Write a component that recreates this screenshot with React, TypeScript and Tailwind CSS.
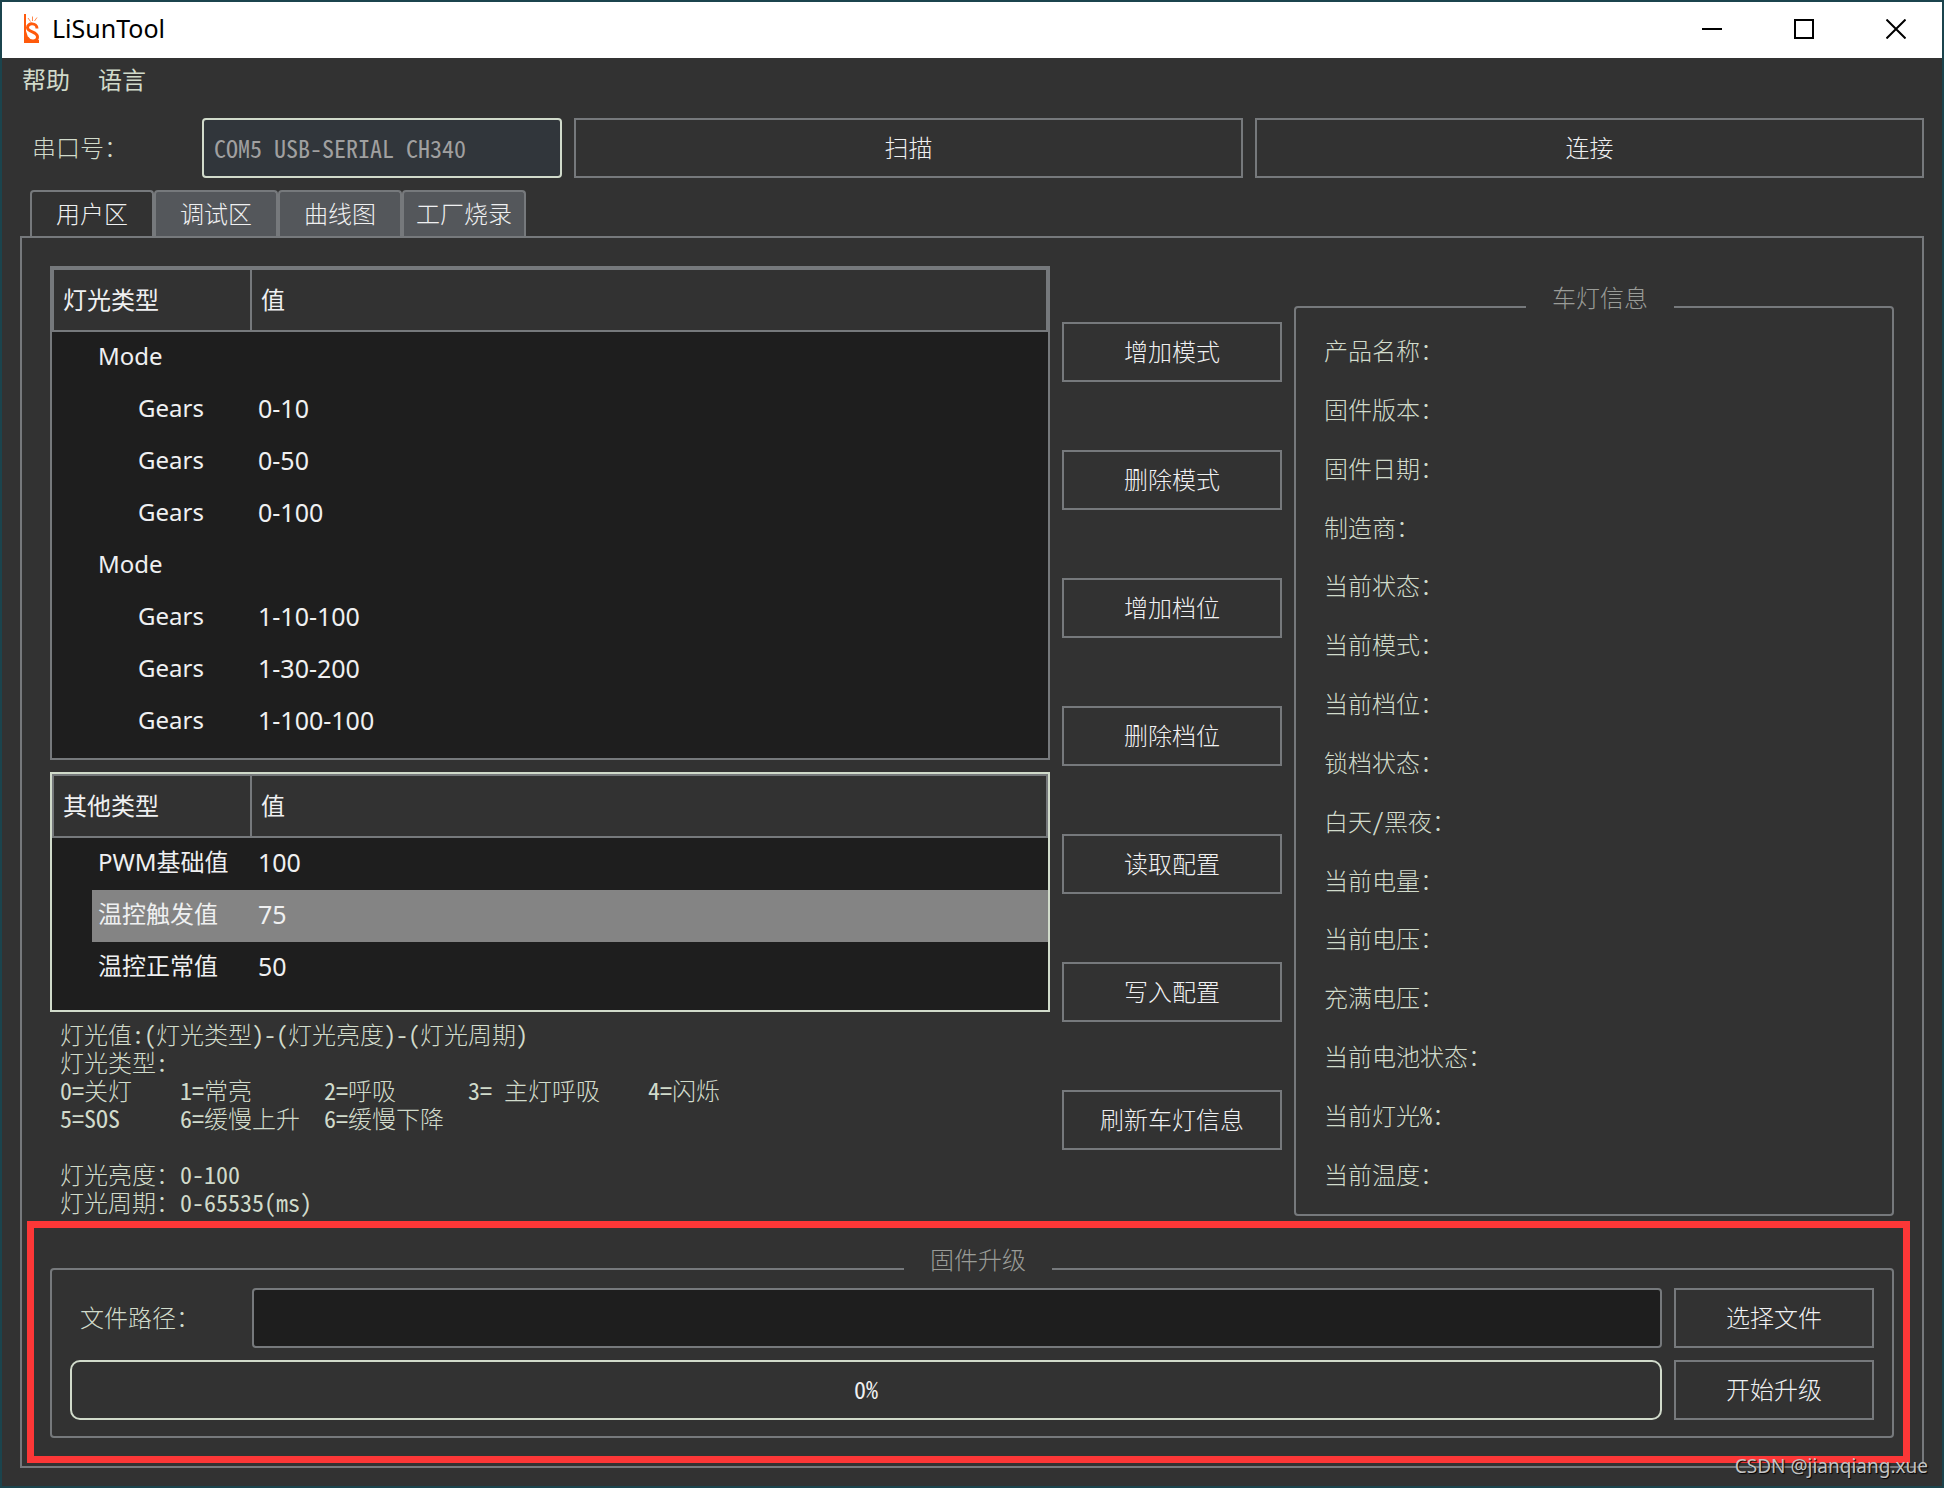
import type { ReactNode } from "react";

type Row = {
  name: string;
  value?: string;
  nested?: boolean;
  selected?: boolean;
};

const tabs = ["用户区", "调试区", "曲线图", "工厂烧录"];

const lightRows: Row[] = [
  { name: "Mode" },
  { name: "Gears", value: "0-10", nested: true },
  { name: "Gears", value: "0-50", nested: true },
  { name: "Gears", value: "0-100", nested: true },
  { name: "Mode" },
  { name: "Gears", value: "1-10-100", nested: true },
  { name: "Gears", value: "1-30-200", nested: true },
  { name: "Gears", value: "1-100-100", nested: true },
];

const otherRows: Row[] = [
  { name: "PWM基础值", value: "100" },
  { name: "温控触发值", value: "75", selected: true },
  { name: "温控正常值", value: "50" },
];

const actions = [
  "增加模式",
  "删除模式",
  "增加档位",
  "删除档位",
  "读取配置",
  "写入配置",
  "刷新车灯信息",
];

const infoLabels = [
  "产品名称：",
  "固件版本：",
  "固件日期：",
  "制造商：",
  "当前状态：",
  "当前模式：",
  "当前档位：",
  "锁档状态：",
  "白天/黑夜：",
  "当前电量：",
  "当前电压：",
  "充满电压：",
  "当前电池状态：",
  "当前灯光%：",
  "当前温度：",
];

const helpLines = [
  "灯光值:(灯光类型)-(灯光亮度)-(灯光周期)",
  "灯光类型:",
  "0=关灯    1=常亮      2=呼吸      3= 主灯呼吸    4=闪烁",
  "5=SOS     6=缓慢上升  6=缓慢下降",
  "",
  "灯光亮度：0-100",
  "灯光周期：0-65535(ms)",
];

// Latin characters take half the width of a Chinese one
function MonoText({ text }: { text: string }) {
  return (
    <>
      {text.split(/([\x20-\x7e]+)/).map((part, i) =>
        i % 2 === 1 ? (
          <span
            key={i}
            className="font-['Noto_Sans_Mono_CJK_SC','Liberation_Mono',monospace]"
          >
            {part}
          </span>
        ) : (
          part
        )
      )}
    </>
  );
}

function PushButton({
  children,
  className = "",
}: {
  children: ReactNode;
  className?: string;
}) {
  return (
    <button
      type="button"
      className={`h-[60px] border-2 border-[#76797c] pb-0.5 text-[#eff0f1] ${className}`}
    >
      {children}
    </button>
  );
}

function ValueTable({
  title,
  rows,
  className,
}: {
  title: string;
  rows: Row[];
  className: string;
}) {
  return (
    <div
      className={`border-2 bg-[#1e1e1e] text-[#eff0f1] font-normal font-['Noto_Sans','Noto_Sans_CJK_SC',sans-serif] ${className}`}
    >
      <table className="w-full table-fixed border-separate border-spacing-0 text-left">
        <thead>
          <tr className="h-16 bg-[#323232]">
            <th className="w-[200px] border-2 border-[#76797c] py-0 pl-[9px] font-normal">
              {title}
            </th>
            <th className="border-2 border-l-0 border-[#76797c] py-0 pl-[9px] font-normal">
              值
            </th>
          </tr>
        </thead>
        <tbody>
          {rows.map((row, i) => (
            <tr key={i} className="h-[52px]">
              <td className="p-0">
                <div
                  className={`ml-10 h-[52px] leading-[48px] whitespace-nowrap ${
                    row.nested ? "pl-[46px]" : "pl-1.5"
                  } ${row.selected ? "bg-[#848484]" : ""}`}
                >
                  {row.name}
                </div>
              </td>
              <td
                className={`pt-0 pb-1 pl-1.5 text-[25px] leading-[48px] ${
                  row.selected ? "bg-[#848484]" : ""
                }`}
              >
                {row.value}
              </td>
            </tr>
          ))}
        </tbody>
      </table>
    </div>
  );
}

function Logo() {
  return (
    <svg
      width="16"
      height="30"
      viewBox="0 0 16 30"
      fill="none"
      aria-hidden="true"
    >
      <path d="M0 0H2V17L5 26H15V29H0Z" fill="#ff5a0c" />
      <path
        d="M13 14.500C13 8.500 3.500 8.500 3.500 13.500C3.500 18.500 13.500 17.500 13.500 23C13.500 28 5.500 28.500 3 23.500"
        stroke="#ff5a0c"
        strokeWidth="3"
      />
      <path
        d="M4 4L6.500 7.500M8.500 2.500V7M13 3.500L10.500 7"
        stroke="#ff8a50"
        strokeWidth="1"
      />
    </svg>
  );
}

function TitleBar() {
  return (
    <header className="flex h-14 items-center bg-white pb-0.5 text-black">
      <div className="flex items-center gap-3 pl-[22px] text-[25px] font-normal font-['Noto_Sans',sans-serif]">
        <Logo />
        <h1>LiSunTool</h1>
      </div>
      <div className="ml-auto flex h-full">
        <button
          type="button"
          aria-label="最小化"
          className="flex w-[92px] items-center justify-center"
        >
          <svg width="20" height="20" viewBox="0 0 20 20">
            <path d="M0 10H20" stroke="#000" strokeWidth="2" />
          </svg>
        </button>
        <button
          type="button"
          aria-label="最大化"
          className="flex w-[92px] items-center justify-center"
        >
          <svg width="20" height="20" viewBox="0 0 20 20">
            <rect
              x="1"
              y="1"
              width="18"
              height="18"
              fill="none"
              stroke="#000"
              strokeWidth="2"
            />
          </svg>
        </button>
        <button
          type="button"
          aria-label="关闭"
          className="flex w-[92px] items-center justify-center"
        >
          <svg width="20" height="20" viewBox="0 0 20 20">
            <path
              d="M0.500 0.500L19.500 19.500M19.500 0.500L0.500 19.500"
              stroke="#000"
              strokeWidth="2"
            />
          </svg>
        </button>
      </div>
    </header>
  );
}

export default function App() {
  return (
    <div className="min-h-screen bg-[#1b444d] p-0.5 text-[24px] font-light text-[#d1dbcb] font-['Noto_Sans_CJK_SC',sans-serif]">
      <div className="relative bg-[#323232] pb-[18px]">
        <TitleBar />

        <nav className="flex h-[46px] items-center gap-7 pb-1 pl-5 font-normal">
          <button type="button">帮助</button>
          <button type="button">语言</button>
        </nav>

        <div className="mt-3.5 flex items-center gap-3 pr-[18px] pl-[30px]">
          <label htmlFor="port" className="w-[158px] pb-0.5">
            串口号：
          </label>
          <select
            id="port"
            className="h-[60px] w-[360px] appearance-none rounded-sm border-2 border-[#d1dbcb] bg-[#31363b] px-2.5 text-[#a0a0a0] font-['Noto_Sans_Mono_CJK_SC','Liberation_Mono',monospace]"
          >
            <option>COM5 USB-SERIAL CH340</option>
          </select>
          <PushButton className="flex-1">扫描</PushButton>
          <PushButton className="flex-1">连接</PushButton>
        </div>

        <div role="tablist" className="mt-3 flex pl-7">
          {tabs.map((tab, i) => (
            <button
              key={tab}
              type="button"
              role="tab"
              aria-selected={i === 0}
              className={`h-[46px] w-[124px] rounded-t-sm border-2 border-b-0 border-[#76797c] pb-0.5 text-[#eff0f1] ${
                i === 0 ? "" : "bg-[#54575b]"
              }`}
            >
              {tab}
            </button>
          ))}
        </div>

        <main className="mr-[18px] ml-[18px] border-2 border-[#76797c] p-7">
          <div className="grid grid-cols-[minmax(0,5fr)_220px_minmax(0,3fr)] gap-3">
            <div>
              <ValueTable
                title="灯光类型"
                rows={lightRows}
                className="border-[#76797c] pb-2.5"
              />
              <ValueTable
                title="其他类型"
                rows={otherRows}
                className="mt-3 border-[#d1dbcb] pb-4"
              />
              <div className="mt-2 mb-0.5 pl-2.5 whitespace-pre">
                {helpLines.map((line, i) => (
                  <p key={i} className="h-7 leading-7">
                    <MonoText text={line} />
                  </p>
                ))}
              </div>
            </div>

            <div className="flex flex-col gap-[68px] pt-14">
              {actions.map((action) => (
                <PushButton key={action}>{action}</PushButton>
              ))}
            </div>

            <fieldset className="mt-[22px] mb-0.5 flex min-w-0 flex-col rounded-sm border-2 border-[#76797c] pr-4 pl-7">
              <legend className="mx-auto px-[26px] pb-5 leading-[18px] text-[#9a9c98]">
                车灯信息
              </legend>
              <ul className="flex flex-1 flex-col justify-between pt-[9px] pb-[25px]">
                {infoLabels.map((label) => (
                  <li key={label} className="h-[30px] leading-[30px]">
                    <MonoText text={label} />
                  </li>
                ))}
              </ul>
            </fieldset>
          </div>

          <div className="relative mt-8">
            <fieldset className="rounded-sm border-2 border-[#76797c] pl-3">
              <legend className="mx-auto px-[26px] pb-5 leading-[18px] text-[#9a9c98]">
                固件升级
              </legend>
              <div className="flex flex-col gap-3 pr-[18px] pb-4 pl-1.5">
                <div className="flex items-center gap-3">
                  <label htmlFor="path" className="w-[170px] pb-0.5 pl-2.5">
                    文件路径：
                  </label>
                  <input
                    id="path"
                    type="text"
                    className="h-[60px] min-w-0 flex-1 rounded-sm border-2 border-[#76797c] bg-[#1e1e1e] px-2.5"
                  />
                  <PushButton className="w-[200px]">选择文件</PushButton>
                </div>
                <div className="flex items-center gap-3">
                  <div
                    role="progressbar"
                    aria-label="升级进度"
                    aria-valuenow={0}
                    className="flex h-[60px] flex-1 items-center justify-center rounded-[10px] border-2 border-[#d1dbcb] pb-0.5 text-[#eff0f1]"
                  >
                    <MonoText text="0%" />
                  </div>
                  <PushButton className="w-[200px]">开始升级</PushButton>
                </div>
              </div>
            </fieldset>
            <div className="pointer-events-none absolute -top-[29px] -right-4 -bottom-[25px] -left-[23px] border-7 border-[#fc3737]" />
          </div>
        </main>

        <p className="absolute right-3.5 bottom-1.5 text-[19px] leading-7 font-normal text-[#c4c4c4] font-['Noto_Sans',sans-serif] [text-shadow:1px_1px_1px_#000]">
          CSDN @jianqiang.xue
        </p>
      </div>
    </div>
  );
}
